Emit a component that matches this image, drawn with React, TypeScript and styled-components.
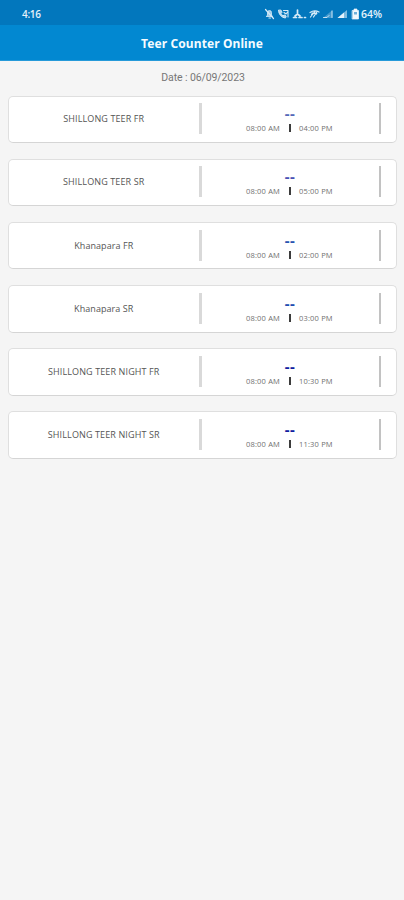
import React from "react";
import styled, { createGlobalStyle } from "styled-components";

const GlobalStyle = createGlobalStyle`
  * { box-sizing: border-box; }
  body { margin: 0; background: #f5f5f5; font-family: "Open Sans", "Noto Sans", sans-serif; }
`;

const Screen = styled.main`
  display: flex;
  flex-direction: column;
  width: 100%;
  height: 900px;
  background: #f5f5f5;
  overflow: hidden;
`;

const StatusBar = styled.div`
  display: flex;
  align-items: center;
  justify-content: space-between;
  height: 25px;
  padding: 2px 21px 0 22px;
  background: #0277bd;
  color: #e4f2fb;
  flex: none;
`;

const Clock = styled.span`
  font: 600 10px/14px "Open Sans", sans-serif;
  letter-spacing: -0.3px;
`;

const StatusIcons = styled.div`
  display: flex;
  align-items: center;
`;

const IconStrip = styled.svg`
  display: block;
  width: 97px;
  height: 14px;
`;

const Battery = styled.span`
  font: 600 10.5px/14px "Open Sans", sans-serif;
  letter-spacing: -0.05px;
  width: 22px;
  white-space: nowrap;
`;

const TitleBar = styled.header`
  display: flex;
  align-items: center;
  justify-content: center;
  height: 36px;
  padding-top: 2px;
  background: #0288d1;
  border-bottom: 1px solid #269ad9;
  color: #f4fbff;
  flex: none;
`;

const Title = styled.h1`
  margin: 0;
  font: 700 12px/18px "Noto Sans", sans-serif;
  letter-spacing: 0.1px;
`;

const DateLine = styled.div`
  height: 34.5px;
  padding: 8px 0 0 2px;
  text-align: center;
  color: #777;
  font: 400 10.5px/17px "Roboto", sans-serif;
  letter-spacing: -0.1px;
  flex: none;
`;

const List = styled.div`
  display: flex;
  flex-direction: column;
  gap: 15.7px;
  padding: 0 7px 0 8px;
`;

const Card = styled.section`
  display: grid;
  grid-template-columns: 189.5px 3px 177px 2px 1fr;
  align-items: center;
  height: 47.5px;
  border: 1px solid #dfdfdf;
  border-bottom-color: #d5d5d5;
  border-radius: 5px;
  background: #fff;
`;

const Name = styled.div<{ $spacing: number }>`
  text-align: center;
  color: #555;
  font: 400 9px/14px "Open Sans", sans-serif;
  letter-spacing: ${(p) => p.$spacing}px;
  white-space: nowrap;
`;

const Divider = styled.div<{ $strong?: boolean }>`
  height: 31px;
  margin-top: -1px;
  background: ${(p) => (p.$strong ? "#c2c2c2" : "#d9d9d9")};
`;

const Result = styled.div`
  display: flex;
  flex-direction: column;
  align-items: center;
  padding-top: 4px;
`;

const Score = styled.div<{ $color: string }>`
  height: 14px;
  color: ${(p) => p.$color};
  font: 700 15px/12px "Noto Sans", sans-serif;
  letter-spacing: 0.5px;
`;

const Times = styled.div`
  display: grid;
  grid-template-columns: 35px 18px 35px;
  align-items: center;
  color: #707070;
  font: 400 7.5px/14px "Open Sans", sans-serif;
  letter-spacing: 0.18px;
  white-space: nowrap;
`;

const Tick = styled.span`
  justify-self: center;
  width: 1.5px;
  height: 8px;
  background: #3c3c3c;
`;

const rows = [
  { name: "SHILLONG TEER FR", end: "04:00 PM", color: "#5468b8", spacing: 0.12 },
  { name: "SHILLONG TEER SR", end: "05:00 PM", color: "#4850b4", spacing: 0.12 },
  { name: "Khanapara FR", end: "02:00 PM", color: "#2854b0", spacing: 0.06 },
  { name: "Khanapara SR", end: "03:00 PM", color: "#204cb0", spacing: 0.06 },
  { name: "SHILLONG TEER NIGHT FR", end: "10:30 PM", color: "#101ca0", spacing: 0.12 },
  { name: "SHILLONG TEER NIGHT SR", end: "11:30 PM", color: "#101ca0", spacing: 0.12 },
];

function StatusGlyphs() {
  return (
    <IconStrip viewBox="0 0 97 14" fill="none" stroke="#d6ebf8" strokeLinecap="round" strokeLinejoin="round">
      <path d="M2.500 9.500h6L7.500 8V5.500a2 2 0 0 0-4 0V8z" fill="#9fcdea" strokeWidth=".8" />
      <path d="M5 11h1.500M1.500 2.500l8 9" strokeWidth="1.2" />
      <path d="M14.500 3.500c.3 4 3 7 7 7.500l.7-2-2-1-1.200.8c-1-.6-1.700-1.500-2-2.500l1-1-.8-1.800z" fill="#b5daf0" strokeWidth="1" />
      <path d="M19.500 3.500h4.500v6.500M20 5.500l2 1.500 2-2.500" strokeWidth="1.100" />
      <path d="M33.500 3v4.500M33.500 7l-2.500 2M33.500 7l2.500 2M29.500 10.500h3M35 10.500h3M40.500 10.500h1" strokeWidth="1.700" />
      <path d="M46 5.500c3-2 6-2 9-.5M47.500 7.500c2-1.400 3.500-1.300 5-.5M46.500 10l4-5M49.500 10l3-4.500M48 6h5" strokeWidth="1.200" />
      <path d="M59 11l9.500-8v8z" fill="#4399ce" stroke="none" />
      <path d="M59.500 10.500h3.500l2-2M68 4v6.500" strokeWidth=".9" />
      <path d="M73.500 11l9.500-8v8z" fill="#7dbbe0" stroke="none" />
      <path d="M73.500 11l6.500-5.500v5.500z" fill="#e4f2fb" stroke="none" />
      <path d="M88.500 3.500h1.500V2h3v1.500h1.500V12h-6z" fill="#f0f8fd" stroke="#f0f8fd" strokeWidth=".7" />
      <path d="M90 5h3v2.500h-3z" fill="#6db0da" stroke="none" />
    </IconStrip>
  );
}

export default function App() {
  return (
    <>
      <GlobalStyle />
      <Screen>
        <StatusBar>
          <Clock>4:16</Clock>
          <StatusIcons>
            <StatusGlyphs />
            <Battery>64%</Battery>
          </StatusIcons>
        </StatusBar>
        <TitleBar>
          <Title>Teer Counter Online</Title>
        </TitleBar>
        <DateLine>Date : 06/09/2023</DateLine>
        <List>
          {rows.map((row) => (
            <Card key={row.name}>
              <Name $spacing={row.spacing}>{row.name}</Name>
              <Divider />
              <Result>
                <Score $color={row.color}>--</Score>
                <Times>
                  <span>08:00 AM</span>
                  <Tick />
                  <span>{row.end}</span>
                </Times>
              </Result>
              <Divider $strong />
            </Card>
          ))}
        </List>
      </Screen>
    </>
  );
}
